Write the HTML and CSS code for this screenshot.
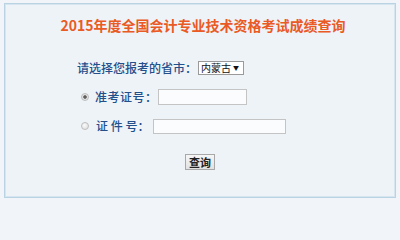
FILE: index.html
```html
<!DOCTYPE html>
<html lang="zh-CN">
<head>
<meta charset="utf-8">
<title>成绩查询</title>
<link rel="stylesheet" href="styles.css">
</head>
<body>
<div class="page">
  <div class="box">
    <h1 class="title">2015年度全国会计专业技术资格考试成绩查询</h1>
    <form class="form">
      <div class="row row-first">
        <span class="label">请选择您报考的省市：</span>
        <span class="select-wrap">
          <select class="select"><option>内蒙古</option></select>
          <span class="arrow">▼</span>
        </span>
      </div>
      <div class="row row-radio">
        <input type="radio" class="radio" name="t" checked>
        <span class="label label-a">准考证号：</span>
        <input type="text" class="field field-a">
      </div>
      <div class="row row-radio">
        <input type="radio" class="radio" name="t">
        <span class="label label-b">证 件 号：</span>
        <input type="text" class="field field-b">
      </div>
      <div class="actions">
        <button type="button" class="btn">查询</button>
      </div>
    </form>
  </div>
</div>
</body>
</html>
```

FILE: styles.css
```css
html, body {
  margin: 0;
  padding: 0;
  background: #f1f5f9;
}
.page {
  padding: 3px 4px 0 4px;
  width: 400px;
  height: 204px;
  box-sizing: border-box;
}
.box {
  border: 1px solid #b9d3e3;
  box-shadow: inset 0 0 0 1px #d6e5ef;
  background: #eef3f8;
  height: 195px;
  box-sizing: border-box;
  padding-top: 11px;
  font-family: "Noto Sans CJK SC", sans-serif;
}
.title {
  margin: 0;
  font-size: 14px;
  line-height: 20px;
  font-weight: bold;
  color: #ea5a24;
  text-align: center;
  padding-left: 6px;
}
.form {
  margin: 23px 0 0 0;
  padding-left: 72px;
  display: flex;
  flex-direction: column;
  gap: 9px;
}
.row {
  display: flex;
  align-items: center;
  height: 20px;
}
.label {
  font-size: 12px;
  line-height: 20px;
  font-weight: 500;
  color: #234f8b;
  white-space: pre;
}
.select-wrap {
  display: inline-flex;
  align-items: center;
  margin-left: 1px;
  height: 14px;
  width: 46px;
  box-sizing: border-box;
  border: 1px solid #9a9a9a;
  background: #fff;
  overflow: hidden;
}
.select {
  appearance: none;
  -webkit-appearance: none;
  border: 0;
  background: transparent;
  padding: 0 0 0 2px;
  margin: 0;
  font-family: "Noto Sans CJK SC", sans-serif;
  font-size: 10px;
  line-height: 12px;
  height: 12px;
  width: 33px;
  color: #111;
  outline: none;
}
.arrow {
  font-size: 6px;
  line-height: 12px;
  color: #111;
  margin-left: 1px;
}
.row-radio {
  padding-left: 4px;
}
.radio {
  appearance: none;
  -webkit-appearance: none;
  width: 8px;
  height: 8px;
  margin: 0;
  border-radius: 50%;
  border: 1px solid #bdbdbd;
  background: radial-gradient(circle at 40% 35%, #fafafa 0%, #dcdcdc 100%);
  box-sizing: border-box;
}
.radio:checked {
  background: radial-gradient(circle, #555 0, #666 1.4px, #e6e6e6 2.2px, #dadada 100%);
}
.label-a {
  margin-left: 6px;
  letter-spacing: 0.5px;
}
.label-b {
  margin-left: 7px;
}
.field {
  height: 16px;
  box-sizing: border-box;
  border: 1px solid #c4c4c4;
  background: #fbfcfd;
  margin: 0;
  padding: 0 2px;
  outline: none;
}
.field-a {
  width: 89px;
  margin-left: 0;
}
.field-b {
  width: 133px;
  margin-left: 4px;
  height: 15px;
}
.actions {
  display: flex;
  justify-content: center;
  margin-top: 9px;
  padding-right: 72px;
}
.btn {
  width: 30px;
  height: 16px;
  padding: 0;
  margin: 0;
  box-sizing: border-box;
  border: 1px solid #a8a8a8;
  background: linear-gradient(#f6f6f6, #e2e2e2);
  font-family: "Noto Sans CJK SC", sans-serif;
  font-size: 11px;
  line-height: 14px;
  font-weight: bold;
  color: #222;
}
```
